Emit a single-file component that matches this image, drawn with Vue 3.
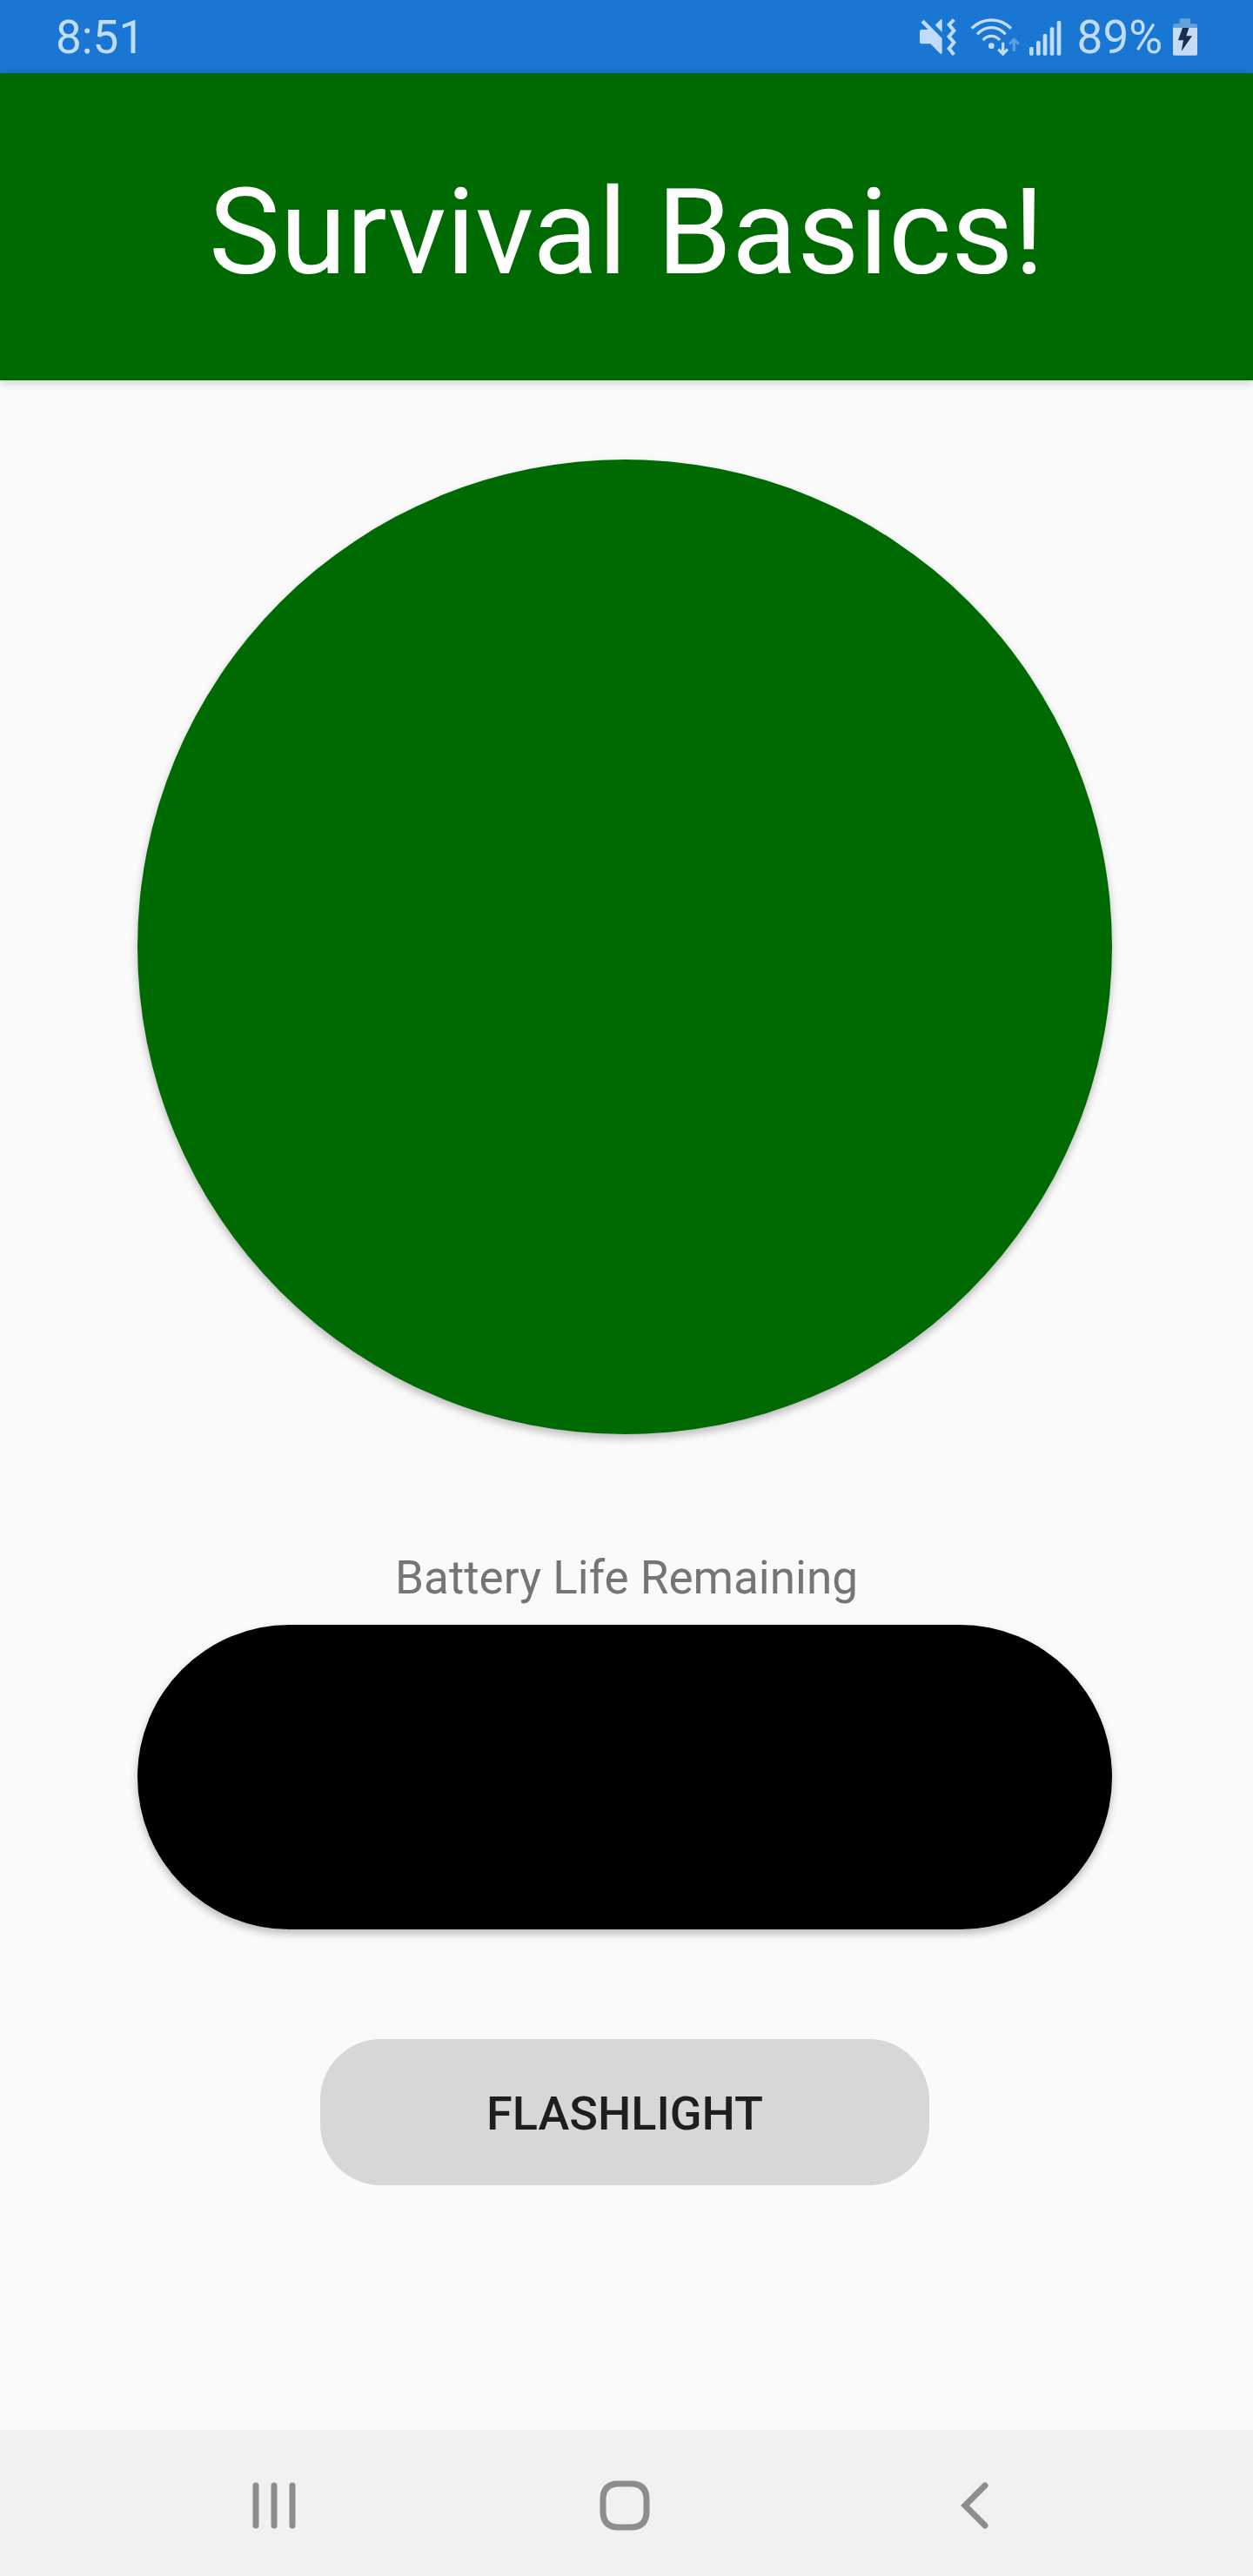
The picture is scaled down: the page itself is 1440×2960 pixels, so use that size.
<script setup>
import { ref } from 'vue'

const time = ref('8:51')
const battery = ref(89)
const torchOn = ref(false)
const signalBars = [
  { x: 429, y: 159 },
  { x: 453, y: 138 },
  { x: 476, y: 114 },
  { x: 500, y: 91 },
  { x: 524, y: 69 },
]
</script>

<template>
  <div class="screen">
    <div class="status-bar">
      <span class="status-text">{{ time }}</span>
      <div class="status-icons">
        <svg class="icon-mute" viewBox="48 60 129 129" aria-hidden="true">
          <path class="fill" d="M65 65 L128 129 V178 Q128 185 122 182 L88 148 H57 Q51 148 51 142 V105 Q51 99 57 99 H80 L55 74 Z" />
          <path class="fill" d="M104 83 L122 65 Q128 60 128 67 V108 Z" />
          <path class="line zigzag" d="M169 65 L152 82 L169 103 L152 123 L169 143 L152 164 L169 185" />
        </svg>
        <svg class="icon-wifi" viewBox="225 60 171 129" aria-hidden="true">
          <path class="line" d="M230 95 Q260 66 298 66 Q336 66 366 95" />
          <path class="line" d="M249 115 Q271 92 298 92 Q325 92 347 115" />
          <path class="line" d="M269 135 Q282 121 298 121 Q314 121 327 135" />
          <circle class="fill" cx="298" cy="155" r="10" />
          <path class="line" d="M338 143 V182 M322 167 L338 183 L354 167" />
          <path class="line dim" d="M376 174 V133 M360 149 L376 133 L392 149" />
        </svg>
        <svg class="icon-signal" viewBox="426 60 114 129" aria-hidden="true">
          <rect
            v-for="bar in signalBars"
            :key="bar.x"
            class="fill"
            :x="bar.x"
            :y="bar.y"
            width="14"
            :height="188 - bar.y"
            rx="5"
          />
        </svg>
        <span class="status-text percent">{{ battery }}%</span>
        <svg class="icon-battery" viewBox="384 60 84 129" aria-hidden="true">
          <path class="dim-fill" d="M407 65 Q407 61 411 61 H440 Q444 61 444 65 V79 H462 Q468 79 468 85 V93 H384 V85 Q384 79 390 79 H407 Z" />
          <path class="battery-body" d="M384 93 H468 V183 Q468 188 463 188 H389 Q384 188 384 183 Z" />
          <path class="bolt" d="M417 93 H439 L430 121 H450 L413 174 L420 136 H402 Z" />
        </svg>
      </div>
    </div>

    <header class="title-bar">
      <h1>Survival Basics!</h1>
    </header>

    <main class="content">
      <button class="surface dial" type="button" aria-label="Survival guide"></button>
      <p id="battery-label" class="label">Battery Life Remaining</p>
      <button class="surface pill" type="button" aria-labelledby="battery-label"></button>
      <button class="flashlight" type="button" :aria-pressed="torchOn" @click="torchOn = !torchOn">
        FLASHLIGHT
      </button>
    </main>

    <nav class="nav-bar">
      <button type="button" aria-label="Recent apps">
        <svg viewBox="0 0 60 60" aria-hidden="true">
          <path d="M9 7 V53 M30 7 V53 M51 7 V53" />
        </svg>
      </button>
      <button type="button" aria-label="Home">
        <svg viewBox="0 0 60 60" aria-hidden="true">
          <path d="M23 5 H37 Q55 5 55 23 V37 Q55 55 37 55 H23 Q5 55 5 37 V23 Q5 5 23 5 Z" />
        </svg>
      </button>
      <button type="button" aria-label="Back">
        <svg viewBox="0 0 60 60" aria-hidden="true">
          <path d="M41 7 L18 30 L41 53" />
        </svg>
      </button>
    </nav>
  </div>
</template>

<style>
body {
  margin: 0;
}
</style>

<style scoped>
.screen {
  display: flex;
  flex-direction: column;
  min-height: 100vh;
  background: #fafafa;
  font-family: Roboto, "Noto Sans", sans-serif;
}

button {
  padding: 0;
  border: 0;
  font-family: inherit;
  cursor: pointer;
}

.status-bar {
  display: flex;
  align-items: center;
  justify-content: space-between;
  height: 84px;
  padding: 0 64px;
  background: #1976d2;
}

.status-text {
  padding-top: 2px;
  color: #c0dcf8;
  font-size: 53px;
  line-height: 82px;
}

.status-icons {
  display: flex;
  align-items: center;
}

.status-icons svg {
  height: 43px;
}

.icon-mute {
  width: 43px;
  margin-right: 16px;
}

.icon-wifi {
  width: 57px;
  margin-right: 10px;
}

.icon-signal {
  width: 38px;
}

.percent {
  margin: 0 12px 0 18px;
}

.icon-battery {
  width: 28px;
}

.fill {
  fill: #c0dcf8;
}

.line {
  fill: none;
  stroke: #c0dcf8;
  stroke-width: 10;
}

.zigzag {
  stroke-width: 12;
}

.dim {
  stroke: #5a9ee4;
}

.dim-fill {
  fill: #649fde;
}

.battery-body {
  fill: #c6dbf3;
}

.bolt {
  fill: #14304c;
}

.title-bar {
  padding: 101px 0 88px;
  background: #006a02;
  box-shadow: 0 2px 10px rgba(0, 0, 0, 0.2);
}

h1 {
  margin: 0;
  color: #ffffff;
  font-size: 138px;
  font-weight: 400;
  line-height: 164px;
  text-align: center;
}

.content {
  display: flex;
  flex: 1;
  flex-direction: column;
  align-items: center;
  padding: 91px 0;
}

.surface {
  width: calc(100% - 320px);
  margin-right: 4px;
  box-shadow: 0 5px 10px rgba(0, 0, 0, 0.25);
}

.dial {
  aspect-ratio: 1;
  border-radius: 50%;
  background: #006a02;
}

.label {
  margin: 133px 0 22px;
  color: #757575;
  font-size: 53px;
  line-height: 64px;
}

.pill {
  height: 350px;
  border-radius: 175px;
  background: #000000;
}

.flashlight {
  width: 700px;
  max-width: 100%;
  height: 168px;
  margin: 126px 4px 0 0;
  padding-top: 2px;
  border-radius: 70px;
  background: #d6d8d7;
  color: #1d1e1e;
  font-size: 54px;
  font-weight: 500;
}

.nav-bar {
  display: flex;
  box-sizing: border-box;
  height: 168px;
  padding: 6px 118px 0 114px;
  background: #f1f1f1;
}

.nav-bar button {
  display: flex;
  flex: 1;
  align-items: center;
  justify-content: center;
  background: none;
}

.nav-bar svg {
  width: 60px;
  height: 60px;
  fill: none;
  stroke: #8d8d8d;
  stroke-linecap: round;
  stroke-width: 7;
}
</style>
